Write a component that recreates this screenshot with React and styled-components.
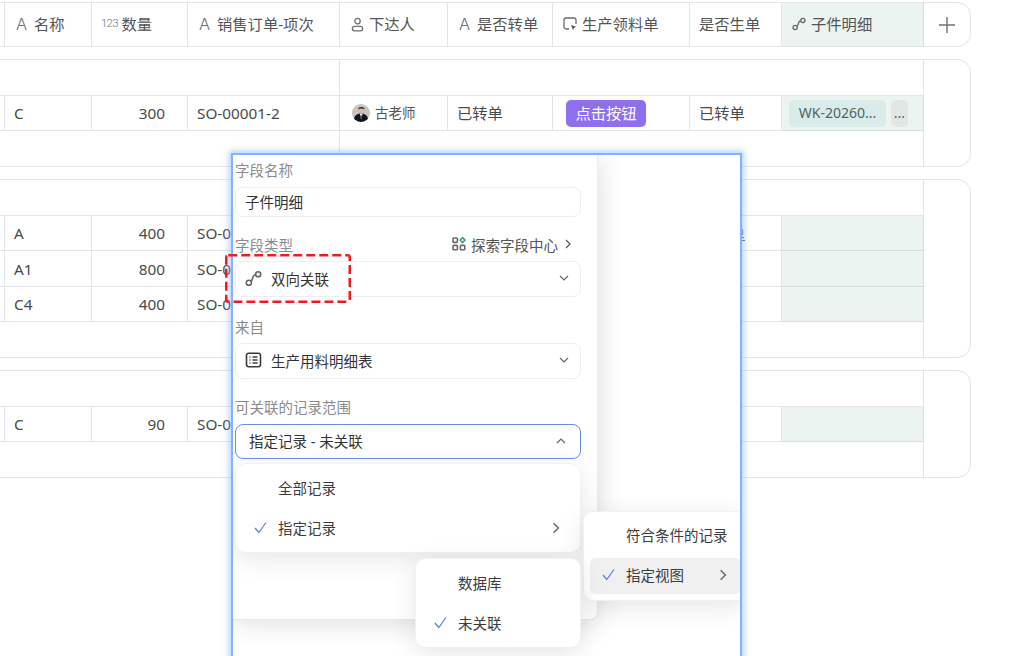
import React from "react";
import styled, { createGlobalStyle } from "styled-components";

const Global = createGlobalStyle`
  html, body { margin: 0; padding: 0; background: #fff; overflow: hidden; }
  body { font-family: "Noto Sans", "Noto Sans CJK SC", sans-serif; color: #444; }
  * { box-sizing: border-box; }
`;

const COLS = [5, 87, 96, 152, 108, 105, 137, 92, 142];
const LINE = "#e4e5e6";
const TEAL = "#ebf4f1";
const TEAL_LINE = "#d4dedb";

const Page = styled.div`
  position: relative;
  width: 1024px;
  height: 656px;
  overflow: hidden;
  padding-top: 2px;
  display: flex;
  flex-direction: column;
  gap: 12px;
`;
const HeaderBar = styled.div`
  width: 971px;
  height: 45px;
  display: flex;
  border: 1px solid ${LINE};
  border-left: none;
  border-radius: 0 14px 14px 0;
  overflow: hidden;
  background: #fff;
`;
const HeadCell = styled.div`
  width: ${(p) => p.$w}px;
  flex: none;
  display: flex;
  align-items: center;
  gap: ${(p) => p.$gap ?? 6}px;
  padding: 0 0 1px ${(p) => p.$pl ?? 11}px;
  border-right: 1px solid ${(p) => (p.$teal ? TEAL_LINE : LINE)};
  background: ${(p) => (p.$teal ? TEAL : "#fff")};
  font-size: 15.3px;
  line-height: 20px;
  color: #555;
  white-space: nowrap;
`;
const AddCell = styled.div`
  flex: 1;
  display: flex;
  align-items: center;
  justify-content: center;
  color: #666;
`;
const TypeA = styled.span`
  font-family: Inter, "Liberation Sans", sans-serif;
  font-weight: 300;
  font-size: 16.5px;
  color: #6f6f6f;
  width: 12px;
`;
const Type123 = styled.span`
  font-family: Roboto, "Liberation Sans", sans-serif;
  font-weight: 300;
  font-size: 11px;
  letter-spacing: -0.3px;
  color: #6f6f6f;
`;
const Group = styled.div`
  width: 971px;
  height: ${(p) => p.$h}px;
  flex: none;
  display: flex;
  border: 1px solid ${LINE};
  border-left: none;
  border-radius: 0 14px 14px 0;
  overflow: hidden;
`;
const GroupBody = styled.div`
  width: 924px;
  flex: none;
  display: flex;
  flex-direction: column;
  border-right: 1px solid ${LINE};
`;
const Spacer = styled.div`
  display: flex;
  height: ${(p) => p.$h}px;
  flex: ${(p) => (p.$grow ? 1 : "none")};
  ${(p) => (p.$line ? `border-bottom: 1px solid ${LINE};` : "")}
`;
const Frozen = styled.div`
  width: 340px;
  flex: none;
  border-right: 1px solid ${LINE};
`;
const Row = styled.div`
  display: flex;
  height: ${(p) => p.$h}px;
  flex: none;
  border-bottom: 1px solid ${LINE};
`;
const Cell = styled.div`
  width: ${(p) => p.$w}px;
  flex: none;
  display: flex;
  align-items: center;
  justify-content: ${(p) => (p.$num ? "flex-end" : "flex-start")};
  gap: ${(p) => p.$gap ?? 0}px;
  padding: 0 ${(p) => (p.$num ? 22 : 0)}px 0 ${(p) => p.$pl ?? 9}px;
  border-right: 1px solid ${(p) => (p.$teal ? TEAL_LINE : LINE)};
  font-size: 15.3px;
  line-height: 20px;
  color: #4a4a4a;
  white-space: nowrap;
  overflow: hidden;
  ${(p) => (p.$teal ? `background: ${TEAL}; box-shadow: 0 1px 0 ${TEAL_LINE};` : "")}
`;
const Person = styled.span`
  font-size: 13.5px;
  color: #555;
`;
const PurpleBtn = styled.span`
  height: 27px;
  width: 80px;
  border-radius: 5px;
  background: #8d6ff0;
  color: #fff;
  display: flex;
  align-items: center;
  justify-content: center;
  font-size: 15.3px;
`;
const Tag = styled.span`
  height: 27px;
  width: ${(p) => p.$w}px;
  flex: none;
  border-radius: 5px;
  background: ${(p) => p.$bg};
  color: #4f6367;
  display: flex;
  align-items: center;
  justify-content: center;
  font-size: 14px;
`;
const LinkText = styled.span`
  color: #5b6b8c;
  text-decoration: underline;
`;

/* Overlay panel */
const Panel = styled.div`
  position: absolute;
  left: 231px;
  top: 153px;
  width: 511px;
  height: 520px;
  background: #fff;
  border: 2px solid #7fb3ff;
  box-shadow: 0 0 6px 2px rgba(120, 172, 255, 0.55);
`;
const PanelClip = styled.div`
  position: relative;
  width: 100%;
  height: 100%;
  overflow: hidden;
`;
const Form = styled.div`
  width: 365px;
  height: 465px;
  background: #fff;
  padding: 5px 16px 0 2px;
  border-right: 1px solid #ececec;
  border-bottom: 1px solid #e8e8e8;
  border-radius: 0 0 8px 0;
  box-shadow: 2px 4px 26px rgba(0, 0, 0, 0.13);
`;
const LabelRow = styled.div`
  display: flex;
  justify-content: space-between;
  align-items: center;
  height: 20px;
  padding-bottom: 2px;
  margin-top: ${(p) => p.$mt ?? 0}px;
  margin-bottom: ${(p) => p.$mb ?? 6}px;
`;
const Label = styled.span`
  font-size: 14.5px;
  color: #8b8b8b;
`;
const Explore = styled.span`
  display: flex;
  align-items: center;
  gap: 5px;
  font-size: 14.5px;
  color: #555;
  margin-right: 8px;
`;
const Control = styled.div`
  height: ${(p) => p.$h}px;
  display: flex;
  align-items: center;
  gap: 9px;
  padding: 0 ${(p) => (p.$active ? 14 : 11)}px 2px ${(p) => p.$pl ?? 9}px;
  border: 1px solid ${(p) => (p.$active ? "#6b8fe0" : "#eceef0")};
  border-radius: 8px;
  background: #fff;
  font-size: 14.5px;
  color: #333;
  white-space: nowrap;
`;
const Grow = styled.span`
  flex: 1;
`;
const Highlight = styled.svg`
  position: absolute;
  left: -8px;
  top: 99px;
  width: 126px;
  height: 49px;
  pointer-events: none;
`;
const Menu = styled.div`
  position: absolute;
  left: ${(p) => p.$x}px;
  top: ${(p) => p.$y}px;
  width: ${(p) => p.$w}px;
  padding: 6px;
  display: flex;
  flex-direction: column;
  gap: 4px;
  background: #fff;
  border: 1px solid #f1f1f1;
  border-radius: 10px;
  box-shadow: 0 6px 26px rgba(0, 0, 0, 0.1);
`;
const Item = styled.div`
  height: 36px;
  display: flex;
  align-items: center;
  padding: 0 12px ${(p) => p.$pb ?? 1}px 12px;
  border-radius: 6px;
  background: ${(p) => (p.$hover ? "#f0f0f0" : "transparent")};
  font-size: 14.5px;
  color: #3c3c3c;
  white-space: nowrap;
`;
const CheckSlot = styled.span`
  width: 24px;
  flex: none;
  display: flex;
  align-items: center;
`;

const LinkIcon = ({ size = 14, color = "#666" }) => (
  <svg width={size} height={size} viewBox="0 0 16 16" fill="none" stroke={color} strokeWidth="1.5">
    <circle cx="3.6" cy="12" r="2.4" />
    <circle cx="12.4" cy="4" r="2.4" />
    <path d="M5.6 10.6 C 7.5 9.5 6.8 6.8 8.2 5.4 C 8.8 4.8 9.4 4.4 10 4.2" />
  </svg>
);
const PersonIcon = () => (
  <svg width="13" height="15" viewBox="0 0 14 16" fill="none" stroke="#6f6f6f" strokeWidth="1.4">
    <circle cx="7" cy="4.4" r="2.9" />
    <rect x="1.5" y="10" width="11" height="4.8" rx="2.2" />
  </svg>
);
const CursorIcon = () => (
  <svg width="14" height="14" viewBox="0 0 14 14" fill="none">
    <path d="M6 12H3a2 2 0 0 1-2-2V3a2 2 0 0 1 2-2h8a2 2 0 0 1 2 2v4" stroke="#6a6a6a" strokeWidth="1.3" />
    <path d="M8 8l5.2 1.8-2.2 1 -1 2.2z" fill="#555" />
  </svg>
);
const PlusIcon = () => (
  <svg width="16" height="16" viewBox="0 0 16 16" stroke="#707070" strokeWidth="1.4">
    <path d="M8 0v16M0 8h16" />
  </svg>
);
const Avatar = () => (
  <svg width="18" height="18" viewBox="0 0 18 18">
    <defs>
      <clipPath id="av"><circle cx="9" cy="9" r="9" /></clipPath>
    </defs>
    <g clipPath="url(#av)">
      <rect width="18" height="18" fill="#c4c4c2" />
      <circle cx="9.4" cy="6" r="3" fill="#d8b9a4" />
      <path d="M6.2 5.4C6 2.2 12.6 2.2 12.5 5.4 11 4.2 7.6 4.4 6.2 5.4z" fill="#26231f" />
      <path d="M1.5 18c0-6 3-8.6 7.5-8.6s7.5 2.6 7.5 8.6z" fill="#10131a" />
      <path d="M7.6 9.6h3.2l-1.6 4.4z" fill="#f2f2f2" />
      <path d="M8.8 11h.8l.4 3.4-.8 1.2-.8-1.2z" fill="#3a5a96" />
    </g>
  </svg>
);
const GridIcon = () => (
  <svg width="14" height="14" viewBox="0 0 14 14" fill="none" strokeWidth="1.6">
    <rect x="1" y="1" width="4.4" height="4.4" rx="0.8" stroke="#6a6a6a" />
    <rect x="1" y="8.4" width="4.4" height="4.4" rx="0.8" stroke="#6a6a6a" />
    <rect x="8.4" y="8.4" width="4.4" height="4.4" rx="0.8" stroke="#6a6a6a" />
    <path d="M10.6 .6l2.4 2.5-2.4 2.5-2.4-2.5z" stroke="#3f9f8e" />
  </svg>
);
const TableIcon = () => (
  <svg width="17" height="16" viewBox="0 0 17 16" fill="none" stroke="#3c3c3c" strokeWidth="1.6">
    <rect x="1.5" y="1.2" width="14" height="13.6" rx="2.2" />
    <path d="M4.5 5h1M7.5 5h5M4.5 8h1M7.5 8h5M4.5 11h1M7.5 11h5" />
  </svg>
);
const Chevron = ({ dir = "down", size = 10, color = "#666" }) => {
  const d = {
    down: "M1 3l4 4 4-4",
    up: "M1 7l4-4 4 4",
    right: "M3 1l4 4-4 4",
  }[dir];
  return (
    <svg width={size} height={size} viewBox="0 0 10 10" fill="none" stroke={color} strokeWidth="1.2">
      <path d={d} />
    </svg>
  );
};
const Check = () => (
  <svg width="13" height="13" viewBox="0 0 13 13" fill="none" stroke="#5a7fd6" strokeWidth="1.2">
    <path d="M1 7l3.8 4.5L12 1.5" />
  </svg>
);

const Cells = ({ name, qty, so, link }) => (
  <>
    <Cell $w={COLS[0]} $pl={0} />
    <Cell $w={COLS[1]}>{name}</Cell>
    <Cell $w={COLS[2]} $num>{qty}</Cell>
    <Cell $w={COLS[3]}>{so}</Cell>
    <Cell $w={COLS[4]} />
    <Cell $w={COLS[5]} />
    <Cell $w={COLS[6]} />
    <Cell $w={COLS[7]}>{link ? <LinkText>已转单</LinkText> : null}</Cell>
    <Cell $w={COLS[8]} $teal />
  </>
);

const TopSpacer = () => (
  <Spacer $h={36} $line>
    <Frozen />
  </Spacer>
);
const BottomSpacer = () => (
  <Spacer $grow>
    <Frozen />
  </Spacer>
);

export default function App() {
  return (
    <>
      <Global />
      <Page>
        <HeaderBar>
          <HeadCell $w={COLS[0]} $pl={0} />
          <HeadCell $w={COLS[1]}><TypeA>A</TypeA>名称</HeadCell>
          <HeadCell $w={COLS[2]} $pl={9} $gap={3}><Type123>123</Type123>数量</HeadCell>
          <HeadCell $w={COLS[3]}><TypeA>A</TypeA>销售订单-项次</HeadCell>
          <HeadCell $w={COLS[4]} $gap={5}><PersonIcon />下达人</HeadCell>
          <HeadCell $w={COLS[5]}><TypeA>A</TypeA>是否转单</HeadCell>
          <HeadCell $w={COLS[6]} $pl={10} $gap={5}><CursorIcon />生产领料单</HeadCell>
          <HeadCell $w={COLS[7]} $pl={9}>是否生单</HeadCell>
          <HeadCell $w={COLS[8]} $pl={10} $gap={5} $teal><LinkIcon />子件明细</HeadCell>
          <AddCell><PlusIcon /></AddCell>
        </HeaderBar>

        <Group $h={108}>
          <GroupBody>
            <TopSpacer />
            <Row $h={35}>
              <Cell $w={COLS[0]} $pl={0} />
              <Cell $w={COLS[1]}>C</Cell>
              <Cell $w={COLS[2]} $num>300</Cell>
              <Cell $w={COLS[3]}>SO-00001-2</Cell>
              <Cell $w={COLS[4]} $pl={12} $gap={5}><Avatar /><Person>古老师</Person></Cell>
              <Cell $w={COLS[5]}>已转单</Cell>
              <Cell $w={COLS[6]} $pl={13}><PurpleBtn>点击按钮</PurpleBtn></Cell>
              <Cell $w={COLS[7]}>已转单</Cell>
              <Cell $w={COLS[8]} $teal $pl={7} $gap={5}>
                <Tag $w={97} $bg="#daecea">WK-20260...</Tag>
                <Tag $w={17} $bg="#e2e7e6">...</Tag>
              </Cell>
            </Row>
            <BottomSpacer />
          </GroupBody>
        </Group>

        <Group $h={179}>
          <GroupBody>
            <TopSpacer />
            <Row $h={35}><Cells name="A" qty="400" so="SO-0" link /></Row>
            <Row $h={36}><Cells name="A1" qty="800" so="SO-0" /></Row>
            <Row $h={35}><Cells name="C4" qty="400" so="SO-0" /></Row>
            <BottomSpacer />
          </GroupBody>
        </Group>

        <Group $h={108}>
          <GroupBody>
            <TopSpacer />
            <Row $h={35}><Cells name="C" qty="90" so="SO-0" /></Row>
            <BottomSpacer />
          </GroupBody>
        </Group>

        <Panel>
          <PanelClip>
            <Form>
              <LabelRow $mb={7}><Label>字段名称</Label></LabelRow>
              <Control $h={30}>子件明细</Control>
              <LabelRow $mt={18}>
                <Label>字段类型</Label>
                <Explore><GridIcon />探索字段中心<Chevron dir="right" color="#555" /></Explore>
              </LabelRow>
              <Control $h={36}><LinkIcon size={17} />双向关联<Grow /><Chevron /></Control>
              <LabelRow $mt={20}><Label>来自</Label></LabelRow>
              <Control $h={36}><TableIcon />生产用料明细表<Grow /><Chevron /></Control>
              <LabelRow $mt={18} $mb={7}><Label>可关联的记录范围</Label></LabelRow>
              <Control $h={35} $active $pl={13}>指定记录 - 未关联<Grow /><Chevron dir="up" /></Control>
            </Form>
            <Menu $x={2} $y={308} $w={346}>
              <Item><CheckSlot />全部记录</Item>
              <Item><CheckSlot><Check /></CheckSlot>指定记录<Grow /><Chevron dir="right" size={12} /></Item>
            </Menu>
            <Menu $x={350} $y={356} $w={165}>
              <Item $pb={3}><CheckSlot />符合条件的记录</Item>
              <Item $pb={3} $hover><CheckSlot><Check /></CheckSlot>指定视图<Grow /><Chevron dir="right" size={12} /></Item>
            </Menu>
            <Menu $x={182} $y={403} $w={166}>
              <Item><CheckSlot />数据库</Item>
              <Item><CheckSlot><Check /></CheckSlot>未关联</Item>
            </Menu>
          </PanelClip>
          <Highlight viewBox="0 0 126 49" fill="none">
            <rect x="1.25" y="1.25" width="123.5" height="46.5" rx="2" stroke="#f01c1c" strokeWidth="2.5" strokeDasharray="9 4" />
          </Highlight>
        </Panel>
      </Page>
    </>
  );
}
